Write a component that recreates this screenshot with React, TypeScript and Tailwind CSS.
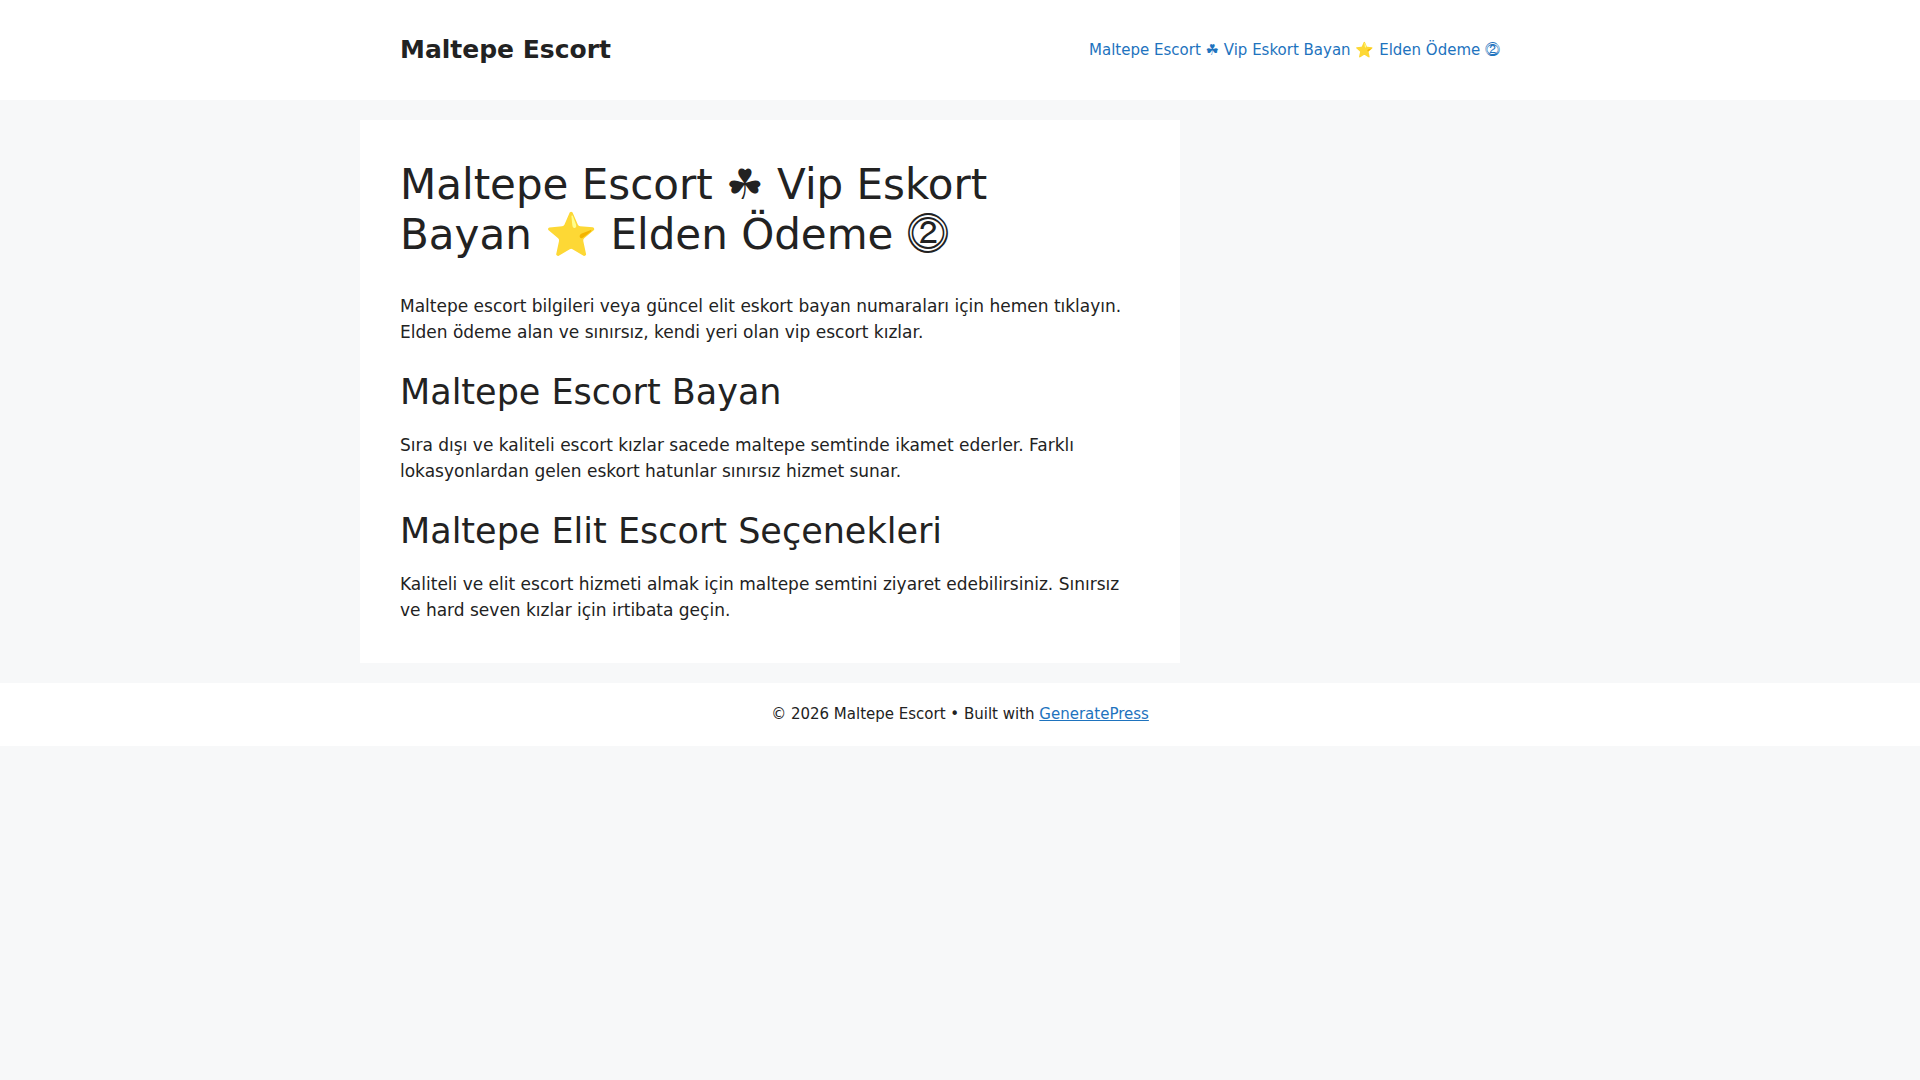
const SITE_NAME = 'Maltepe Escort'
// non-breaking space keeps the star attached to the word before it
const PAGE_TITLE = 'Maltepe Escort ☘ Vip Eskort Bayan\u00a0⭐ Elden Ödeme ⓶'

const SECTIONS = [
  {
    heading: 'Maltepe Escort Bayan',
    text: 'Sıra dışı ve kaliteli escort kızlar sacede maltepe semtinde ikamet ederler. Farklı lokasyonlardan gelen eskort hatunlar sınırsız hizmet sunar.',
  },
  {
    heading: 'Maltepe Elit Escort Seçenekleri',
    text: 'Kaliteli ve elit escort hizmeti almak için maltepe semtini ziyaret edebilirsiniz. Sınırsız ve hard seven kızlar için irtibata geçin.',
  },
]

function SiteHeader() {
  return (
    <header className="bg-white">
      <div className="mx-auto flex max-w-[1200px] items-center justify-between px-10 py-5">
        <a href="#" className="text-[25px] font-bold leading-normal text-[#222222]">{SITE_NAME}</a>
        <nav>
          <a href="#" className="block px-5 text-[15px] leading-[60px] text-[#1e73be]">{PAGE_TITLE}</a>
        </nav>
      </div>
    </header>
  )
}

function Article() {
  return (
    <article className="w-full max-w-[820px] bg-white p-10">
      <h1 className="text-[42px] leading-[50px]">{PAGE_TITLE}</h1>
      <p className="mt-[34px] mb-[26px]">
        Maltepe escort bilgileri veya güncel elit eskort bayan numaraları için hemen tıklayın. Elden ödeme alan ve sınırsız, kendi yeri olan vip escort kızlar.
      </p>
      {SECTIONS.map((section) => (
        <section key={section.heading} className="mb-[26px] last:mb-0">
          <h2 className="mb-5 text-[35px] leading-[42px]">{section.heading}</h2>
          <p>{section.text}</p>
        </section>
      ))}
    </article>
  )
}

export default function App() {
  return (
    <div className="min-h-screen bg-[#f7f8f9] font-['DejaVu_Sans',sans-serif] text-[17px] leading-normal text-[#222222]">
      <SiteHeader />
      <main className="mx-auto max-w-[1200px] py-5">
        <Article />
      </main>
      <footer className="bg-white p-5 text-center text-[15px] leading-normal">
        © 2026 {SITE_NAME} • Built with{' '}
        <a href="#" className="text-[#1e73be] underline">GeneratePress</a>
      </footer>
    </div>
  )
}
